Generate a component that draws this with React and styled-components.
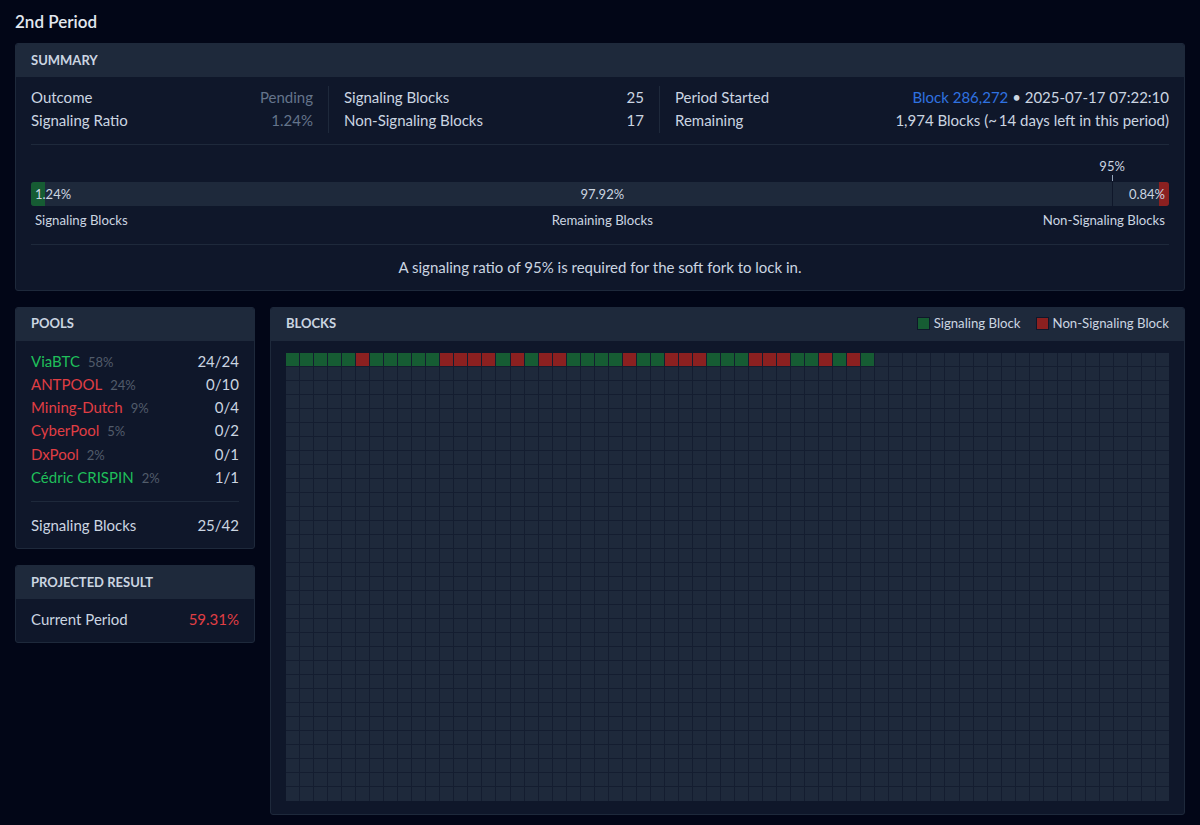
import styled, { createGlobalStyle } from "styled-components";

const GlobalStyle = createGlobalStyle`
  html, body {
    margin: 0;
    background: #020617;
    color: #cbd5e1;
    font-family: Lato, "Open Sans", sans-serif;
    font-size: 15px;
  }
`;

const Page = styled.div`
  padding: 11px 15px 10px;
  display: flex;
  flex-direction: column;
  gap: 11px;
`;

const Title = styled.h1`
  margin: 0;
  font-size: 17px;
  line-height: 21px;
  font-weight: 600;
  color: #e2e8f0;
`;

const Stack = styled.div`
  display: flex;
  flex-direction: column;
  gap: 16px;
`;

const Card = styled.section`
  background: #0f172a;
  border: 1px solid #1e293b;
  border-radius: 3px;
  overflow: hidden;
`;

const CardHeader = styled.header`
  height: 33px;
  padding: 0 15px 2px;
  box-sizing: border-box;
  display: flex;
  align-items: center;
  justify-content: space-between;
  background: #1e293b;
  font-size: 13px;
  font-weight: 700;
  color: #cbd5e1;
  text-transform: uppercase;
`;

const CardBody = styled.div`
  padding: ${(p) => p.$padding || "10px 15px"};
`;

const StatColumns = styled.div`
  display: grid;
  grid-template-columns: 282px 300px 1fr;
  column-gap: 31px;
  padding-bottom: 11px;
  border-bottom: 1px solid #1e293b;
`;

const StatColumn = styled.div`
  position: relative;
  &:not(:last-child)::after {
    content: "";
    position: absolute;
    top: 0;
    bottom: 0;
    right: -16px;
    width: 1px;
    background: #1e293b;
  }
`;

const Row = styled.div`
  display: flex;
  justify-content: space-between;
  line-height: 23.25px;
`;

const Muted = styled.span`
  color: #64748b;
`;

const BlockLink = styled.a`
  color: #2f72e0;
  text-decoration: none;
`;

const Approx = styled.span`
  margin-right: 2px;
`;

const Threshold = styled.div`
  position: relative;
  height: 37px;
`;

const ThresholdLabel = styled.span`
  position: absolute;
  left: 95%;
  top: 13px;
  transform: translateX(-50%);
  font-size: 13px;
  line-height: 16px;
`;

const ThresholdTick = styled.i`
  position: absolute;
  left: 95%;
  top: 30px;
  width: 1px;
  height: 31px;
  background: linear-gradient(#94a3b8 0 6px, transparent 6px 7px, #0f172a 7px);
`;

const Bar = styled.div`
  display: flex;
  height: 24px;
  background: #1e293b;
  border-radius: 3px;
`;

const Segment = styled.div`
  flex: 0 0 ${(p) => p.$width}%;
  min-width: 0;
  display: flex;
  align-items: center;
  justify-content: ${(p) => p.$align};
  padding: 0 4px;
  box-sizing: border-box;
  white-space: nowrap;
  font-size: 13px;
  color: #cbd5e1;
  background: ${(p) => p.$color || "transparent"};
  border-radius: ${(p) => p.$radius || "0"};
`;

const BarLabels = styled.div`
  display: flex;
  height: 22px;
  padding: 6px 0 10px;
  border-bottom: 1px solid #1e293b;
`;

const BarLabel = styled.div`
  flex: 0 0 ${(p) => p.$width}%;
  min-width: 0;
  display: flex;
  align-items: flex-start;
  justify-content: ${(p) => p.$align};
  padding: 0 4px;
  box-sizing: border-box;
  white-space: nowrap;
  font-size: 13.2px;
  line-height: 16px;
  color: #cbd5e1;
`;

const Note = styled.p`
  margin: 0;
  text-align: center;
  line-height: 20px;
  padding: 12px 0 3px;
`;

const Columns = styled.div`
  display: flex;
  align-items: flex-start;
  gap: 15px;
`;

const Sidebar = styled(Stack)`
  flex: 0 0 240px;
`;

const Main = styled(Card)`
  flex: 1;
`;

const PoolName = styled.span`
  color: ${(p) => (p.$ok ? "#1fbf5a" : "#e03e44")};
`;

const PoolShare = styled.span`
  margin-left: 8px;
  font-size: 13px;
  line-height: 1;
  color: #525c6b;
`;

const PoolList = styled.div`
  padding-bottom: 12px;
  border-bottom: 1px solid #1e293b;
  margin-bottom: 12px;
`;

const Legend = styled.div`
  display: flex;
  gap: 15px;
  font-size: 13.2px;
  font-weight: 400;
  text-transform: none;
`;

const LegendItem = styled.span`
  display: flex;
  align-items: center;
  gap: 4px;
`;

const Swatch = styled.i`
  width: 13px;
  height: 13px;
  box-sizing: border-box;
  border: 1px solid #0f172a;
  background: ${(p) => (p.$state === "yes" ? "#165c33" : "#8b2020")};
`;

const BlockGrid = styled.div`
  display: grid;
  grid-template-columns: repeat(63, 1fr);
  grid-template-rows: repeat(32, 1fr);
  gap: 1px;
  width: 883px;
  height: 448px;
  background: #141d30;
`;

const Block = styled.div`
  background: ${(p) =>
    p.$state === "yes" ? "#165c33" : p.$state === "no" ? "#8b2020" : "#1e293b"};
`;

const pools = [
  { name: "ViaBTC", share: "58%", count: "24/24", ok: true },
  { name: "ANTPOOL", share: "24%", count: "0/10" },
  { name: "Mining-Dutch", share: "9%", count: "0/4" },
  { name: "CyberPool", share: "5%", count: "0/2" },
  { name: "DxPool", share: "2%", count: "0/1" },
  { name: "Cédric CRISPIN", share: "2%", count: "1/1", ok: true },
];

// runs of signaling / non-signaling blocks, in mined order
const runs = [5, 1, 5, 4, 1, 1, 1, 2, 4, 1, 2, 3, 3, 3, 2, 1, 1, 1, 1];
const mined = runs.flatMap((n, i) => Array(n).fill(i % 2 === 0 ? "yes" : "no"));
const blocks = Array.from({ length: 2016 }, (_, i) => mined[i] || "empty");

export default function App() {
  return (
    <>
      <GlobalStyle />
      <Page>
        <Title>2nd Period</Title>
        <Stack>
          <Card>
            <CardHeader>Summary</CardHeader>
            <CardBody $padding="9px 15px 10px">
              <StatColumns>
                <StatColumn>
                  <Row>Outcome<Muted>Pending</Muted></Row>
                  <Row>Signaling Ratio<Muted>1.24%</Muted></Row>
                </StatColumn>
                <StatColumn>
                  <Row>Signaling Blocks<span>25</span></Row>
                  <Row>Non-Signaling Blocks<span>17</span></Row>
                </StatColumn>
                <StatColumn>
                  <Row>
                    Period Started
                    <span><BlockLink>Block 286,272</BlockLink> • 2025-07-17 07:22:10</span>
                  </Row>
                  <Row>Remaining<span>1,974 Blocks (<Approx>~</Approx>14 days left in this period)</span></Row>
                </StatColumn>
              </StatColumns>
              <Threshold>
                <ThresholdLabel>95%</ThresholdLabel>
                <ThresholdTick />
              </Threshold>
              <Bar>
                <Segment $width={1.24} $align="flex-start" $color="#165c33" $radius="3px 0 0 3px">1.24%</Segment>
                <Segment $width={97.92} $align="center">97.92%</Segment>
                <Segment $width={0.84} $align="flex-end" $color="#8b2020" $radius="0 3px 3px 0">0.84%</Segment>
              </Bar>
              <BarLabels>
                <BarLabel $width={1.24} $align="flex-start">Signaling Blocks</BarLabel>
                <BarLabel $width={97.92} $align="center">Remaining Blocks</BarLabel>
                <BarLabel $width={0.84} $align="flex-end">Non-Signaling Blocks</BarLabel>
              </BarLabels>
              <Note>A signaling ratio of 95% is required for the soft fork to lock in.</Note>
            </CardBody>
          </Card>
          <Columns>
            <Sidebar>
              <Card>
                <CardHeader>Pools</CardHeader>
                <CardBody $padding="9px 15px 11px">
                  <PoolList>
                    {pools.map((pool) => (
                      <Row key={pool.name}>
                        <span>
                          <PoolName $ok={pool.ok}>{pool.name}</PoolName>
                          <PoolShare>{pool.share}</PoolShare>
                        </span>
                        <span>{pool.count}</span>
                      </Row>
                    ))}
                  </PoolList>
                  <Row>Signaling Blocks<span>25/42</span></Row>
                </CardBody>
              </Card>
              <Card>
                <CardHeader>Projected Result</CardHeader>
                <CardBody $padding="9px 15px 10px">
                  <Row>Current Period<PoolName>59.31%</PoolName></Row>
                </CardBody>
              </Card>
            </Sidebar>
            <Main>
              <CardHeader>
                Blocks
                <Legend>
                  <LegendItem><Swatch $state="yes" />Signaling Block</LegendItem>
                  <LegendItem><Swatch $state="no" />Non-Signaling Block</LegendItem>
                </Legend>
              </CardHeader>
              <CardBody $padding="12px 15px 13px">
                <BlockGrid>
                  {blocks.map((state, i) => (
                    <Block key={i} $state={state} />
                  ))}
                </BlockGrid>
              </CardBody>
            </Main>
          </Columns>
        </Stack>
      </Page>
    </>
  );
}
